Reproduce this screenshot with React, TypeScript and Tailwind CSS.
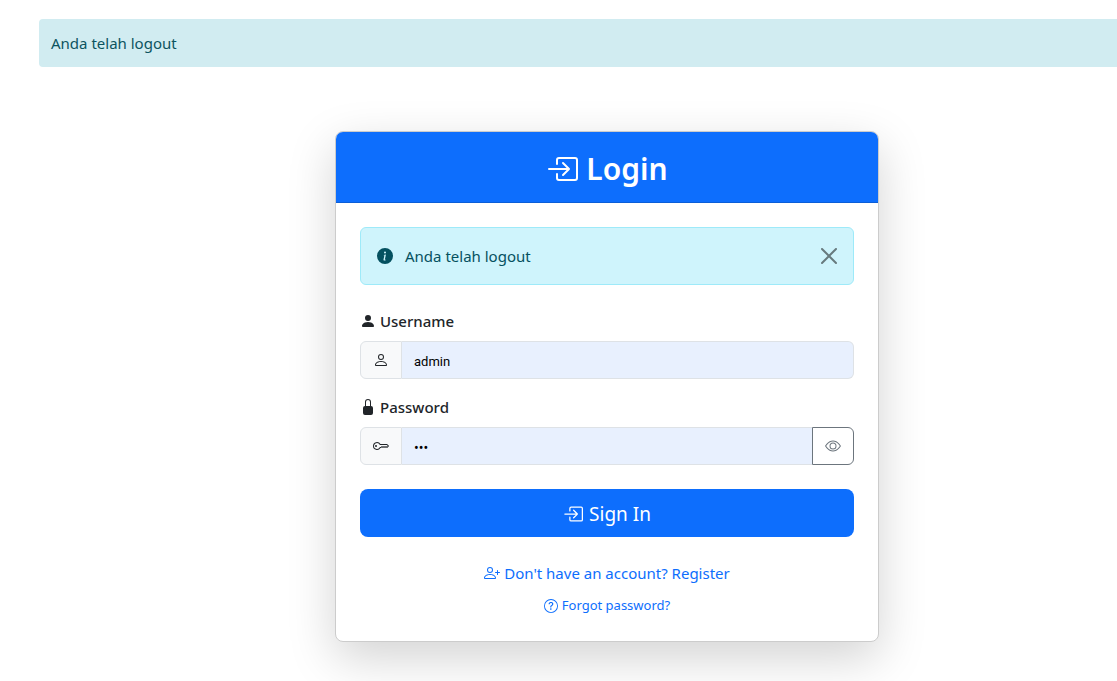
import { useState } from 'react';
import {
  BsBoxArrowInRight,
  BsEye,
  BsInfoCircleFill,
  BsKey,
  BsLockFill,
  BsPerson,
  BsPersonFill,
  BsPersonPlus,
  BsQuestionCircle,
} from 'react-icons/bs';

function CloseIcon() {
  return (
    <svg viewBox="0 0 16 16" className="size-4" fill="currentColor" aria-hidden="true">
      <path d="M.293.293a1 1 0 0 1 1.414 0L8 6.586 14.293.293a1 1 0 1 1 1.414 1.414L9.414 8l6.293 6.293a1 1 0 0 1-1.414 1.414L8 9.414l-6.293 6.293a1 1 0 0 1-1.414-1.414L6.586 8 .293 1.707a1 1 0 0 1 0-1.414z" />
    </svg>
  );
}

export default function App() {
  const [open, setOpen] = useState(true);
  const [visible, setVisible] = useState(false);

  return (
    <main className="min-h-screen overflow-hidden bg-white pt-[19px] pl-[39px] font-['Noto_Sans',sans-serif] text-[15px] leading-6 text-[#212529]">
      <div role="status" className="rounded-l bg-[#d1ecf1] p-3 text-[#0c5460]">
        Anda telah logout
      </div>

      <div className="flex justify-center pt-16 pb-10 pl-[58px]">
        <section className="w-full max-w-[544px] rounded-lg border border-[#cccccc] bg-white shadow-[0_16px_48px_rgba(0,0,0,0.175)]">
          <header className="flex items-center justify-center gap-2 rounded-t-[7px] border-b border-[#0b5ed7] bg-[#0d6efd] pt-[18px] pb-[14px] text-white">
            <BsBoxArrowInRight className="size-8" aria-hidden="true" />
            <h1 className="text-[30px] leading-[38px] font-semibold">Login</h1>
          </header>

          <div className="p-6">
            {open && (
              <div role="alert" className="mb-6 flex items-center rounded-md border border-[#9eeaf9] bg-[#cff4fc] p-4 text-[#055160]">
                <BsInfoCircleFill className="mr-3 size-4" aria-hidden="true" />
                <span>Anda telah logout</span>
                <button type="button" aria-label="Close" onClick={() => setOpen(false)} className="ml-auto text-black/50">
                  <CloseIcon />
                </button>
              </div>
            )}

            <form onSubmit={(e) => e.preventDefault()}>
              <label htmlFor="username" className="mb-2 flex items-center gap-1 font-medium">
                <BsPersonFill className="size-4" aria-hidden="true" />
                Username
              </label>
              <div className="mb-4 flex h-[38px]">
                <span className="flex w-[42px] items-center justify-center rounded-l-md border border-[#dee2e6] bg-[#f8f9fa]">
                  <BsPerson className="size-4" aria-hidden="true" />
                </span>
                <input
                  id="username"
                  type="text"
                  defaultValue="admin"
                  className="min-w-0 flex-1 rounded-r-md border-y border-r border-[#dee2e6] bg-[#e8f0fe] px-3 pt-[3px] font-['Roboto',sans-serif] text-[13px] text-black outline-none"
                />
              </div>

              <label htmlFor="password" className="mb-2 flex items-center gap-1 font-medium">
                <BsLockFill className="size-4" aria-hidden="true" />
                Password
              </label>
              <div className="mb-6 flex h-[38px]">
                <span className="flex w-[42px] items-center justify-center rounded-l-md border border-[#dee2e6] bg-[#f8f9fa]">
                  <BsKey className="size-4" aria-hidden="true" />
                </span>
                <input
                  id="password"
                  type={visible ? 'text' : 'password'}
                  defaultValue="abc"
                  className="min-w-0 flex-1 border-y border-[#dee2e6] bg-[#e8f0fe] px-3 pt-[3px] font-['Roboto',sans-serif] text-[14px] text-black outline-none"
                />
                <button
                  type="button"
                  aria-label="Show password"
                  onClick={() => setVisible(!visible)}
                  className="flex w-[42px] items-center justify-center rounded-r-md border border-[#6c757d] bg-white text-[#6c757d]"
                >
                  <BsEye className="size-4" aria-hidden="true" />
                </button>
              </div>

              <button type="submit" className="mb-6 flex h-12 w-full items-center justify-center gap-1.5 rounded-lg bg-[#0d6efd] pt-0.5 text-[19px] text-white">
                <BsBoxArrowInRight className="size-5" aria-hidden="true" />
                Sign In
              </button>
            </form>

            <nav className="flex flex-col items-center gap-2 text-[#0d6efd]">
              <a href="#register" className="flex items-center gap-1">
                <BsPersonPlus className="size-4" aria-hidden="true" />
                Don't have an account? Register
              </a>
              <a href="#forgot" className="flex items-center gap-1 pt-px text-[13px] leading-[23px]">
                <BsQuestionCircle className="size-3.5" aria-hidden="true" />
                Forgot password?
              </a>
            </nav>
          </div>
        </section>
      </div>
    </main>
  );
}
